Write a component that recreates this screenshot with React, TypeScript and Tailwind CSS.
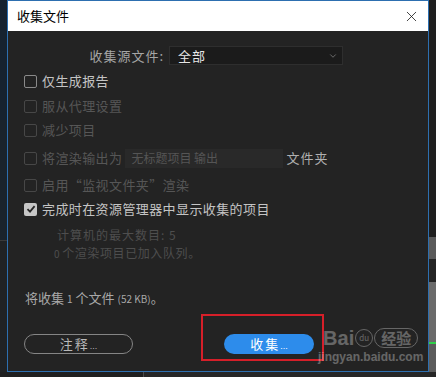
import { ChevronDown, X } from "lucide-react";

const font = { fontFamily: '"Noto Sans CJK SC", "Noto Sans", sans-serif' };
const latin = { fontFamily: '"Liberation Sans", sans-serif' };

function Box({ checked, disabled }: { checked?: boolean; disabled?: boolean }) {
  if (checked) {
    return (
      <div className="w-[13px] h-[13px] rounded-[2px] bg-[#c6c6c6] flex items-center justify-center shrink-0">
        <svg width="10" height="10" viewBox="0 0 10 10">
          <path d="M1.5 5.2 L4 7.6 L8.6 2.2" fill="none" stroke="#262626" strokeWidth="1.8" />
        </svg>
      </div>
    );
  }
  return (
    <div
      className={`w-[13px] h-[13px] rounded-[2px] border-[1.5px] shrink-0 ${
        disabled ? "border-[#474747]" : "border-[#8a8a8a]"
      }`}
    />
  );
}

function Row({
  label,
  checked,
  disabled,
  className = "",
  children,
}: {
  label: string;
  checked?: boolean;
  disabled?: boolean;
  className?: string;
  children?: React.ReactNode;
}) {
  return (
    <div className={`flex items-center h-[20px] ${className}`}>
      <Box checked={checked} disabled={disabled} />
      <span
        className={`ml-[5px] text-[13px] tracking-[0.4px] whitespace-nowrap ${
          disabled ? "text-[#565656]" : "text-[#c4c4c4]"
        }`}
      >
        {label}
      </span>
      {children}
    </div>
  );
}

export default function App() {
  return (
    <div className="w-[436px] h-[377px] bg-[#1c1c1c] overflow-hidden relative" style={font}>
      <div className="flex h-[372px]">
        {/* left desktop strip */}
        <div className="w-[7px] bg-[#131c26] flex flex-col">
          <div className="h-[120px] bg-[#16222f]" />
          <div className="h-[120px] bg-[#1a232c]" />
          <div className="h-[1px] bg-[#3a3a3a]" />
          <div className="flex-1 bg-[#202224]" />
        </div>

        {/* dialog */}
        <div className="w-[422px] border border-[#2d6fb0] bg-[#232323] flex flex-col">
          <div className="h-[30px] bg-white flex items-center justify-between pl-[9px] pr-[8px]">
            <span className="text-[13px] text-black">收集文件</span>
            <X size={17} strokeWidth={1.1} color="#111" />
          </div>

          <div className="flex-1 flex flex-col pl-[16px]">
            <div className="flex items-center mt-[15px] h-[19px]">
              <span className="w-[140px] text-right text-[13px] tracking-[1px] text-[#a6a6a6]">
                收集源文件:
              </span>
              <div className="ml-[5px] w-[174px] h-[19px] bg-[#1b1b1b] border border-[#2e2e2e] flex items-center justify-between pl-[8px] pr-[4px]">
                <span className="text-[13px] tracking-[1px] text-[#e6e6e6]">全部</span>
                <ChevronDown size={10} strokeWidth={1.5} color="#9a9a9a" />
              </div>
            </div>

            <Row label="仅生成报告" className="mt-[6px]" />
            <Row label="服从代理设置" disabled className="mt-[5px]" />
            <Row label="减少项目" disabled className="mt-[4px]" />
            <Row label="将渲染输出为" disabled className="mt-[8px]">
              <div className="ml-[3px] w-[158px] h-[19px] bg-[#292929] flex items-center pl-[6px]">
                <span className="text-[12px] text-[#555555]">无标题项目 输出</span>
              </div>
              <span className="ml-[3px] text-[13px] tracking-[1px] text-[#b0b0b0]">文件夹</span>
            </Row>
            <Row label="启用“监视文件夹”渲染" disabled className="mt-[7px]" />
            <Row label="完成时在资源管理器中显示收集的项目" checked className="mt-[4px]" />

            <div className="mt-[7px] ml-[33px] h-[18px] flex items-center text-[12px] tracking-[1px] text-[#4e4e4e]">
              计算机的最大数目: 5
            </div>
            <div className="ml-[30px] h-[18px] flex items-center text-[12px] tracking-[0.6px] text-[#4e4e4e]">
              <span className="text-[10px] mr-[2px]">0</span>个渲染项目已加入队列。
            </div>

            <div className="mt-[27px] ml-[1px] h-[18px] flex items-center text-[13px] text-[#a8a8a8]">
              将收集
              <span className="text-[10px] mx-[3px]">1</span>
              个文件
              <span className="text-[10px] ml-[3px]">(52 KB)</span>
              。
            </div>

            <div className="mt-[27px] flex items-center h-[20px]">
              <div className="w-[109px] h-[20px] rounded-full border-[1.5px] border-[#858585] flex items-center justify-center text-[13px] tracking-[2px] text-[#b8b8b8]">
                <span>
                  注释<span className="text-[9px] tracking-normal" style={latin}>...</span>
                </span>
              </div>
              <div className="ml-[91px] w-[90px] h-[20px] rounded-full bg-[#2d8ceb] flex items-center justify-center text-[13px] tracking-[2px] text-white">
                <span>
                  收集<span className="text-[9px] tracking-normal" style={latin}>...</span>
                </span>
              </div>
            </div>
          </div>
        </div>

        {/* right desktop strip */}
        <div className="flex-1 bg-[#222222] flex flex-col">
          <div className="h-[237px] bg-[#1f1f1f]" />
          <div className="h-[22px] bg-[#5a5a5a]" />
          <div className="h-[23px] bg-[#242424]" />
          <div className="h-[60px] bg-[#6b6b6b]" />
          <div className="h-[2px] bg-[#2fd04a]" />
          <div className="flex-1 bg-[#5c5c5c]" />
        </div>
      </div>

      {/* bottom desktop strip */}
      <div className="flex h-[5px]">
        <div className="w-[143px] bg-[#1f1f1f]" />
        <div className="w-[1px] bg-[#4a4a4a]" />
        <div className="flex-1 bg-[#262626]" />
      </div>

      {/* red annotation */}
      <div className="absolute left-[201px] top-[314px] w-[123px] h-[47px] border-2 border-[#d61f29]" />

      {/* watermark */}
      <div className="absolute left-[318px] top-[328px] flex flex-col items-center opacity-30 pointer-events-none">
        <div className="flex items-center">
          <span className="text-[20px] font-bold text-white leading-none" style={latin}>
            Bai
          </span>
          <div className="ml-[1px] w-[18px] h-[18px] rounded-full border border-white flex items-center justify-center text-[8px] text-white">
            du
          </div>
          <div className="ml-[1px] h-[20px] px-[6px] rounded-full border border-white flex items-center text-[15px] font-bold text-white">
            经验
          </div>
        </div>
        <span className="text-[12px] font-bold text-white leading-none mt-[3px]" style={latin}>
          jingyan.baidu.com
        </span>
      </div>
    </div>
  );
}
